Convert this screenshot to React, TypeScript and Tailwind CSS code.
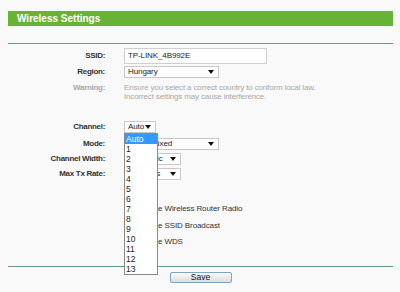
import React from 'react'

const channels = ['Auto', '1', '2', '3', '4', '5', '6', '7', '8', '9', '10', '11', '12', '13']

const Arrow = () => (
  <svg width="6" height="4" viewBox="0 0 6 4" className="shrink-0">
    <path d="M0 0h6L3 4z" fill="#111" />
  </svg>
)

const Select = ({ value, width }: { value: string; width: string }) => (
  <div
    className={`flex h-[12px] ${width} items-center justify-between border border-[#c9c9c9] bg-white pl-[3px] pr-[4px] text-[8px] leading-none tracking-[-0.1px] text-[#222]`}
  >
    <span>{value}</span>
    <Arrow />
  </div>
)

const Row = ({
  label,
  children,
  muted,
  className = '',
}: {
  label: string
  children: React.ReactNode
  muted?: boolean
  className?: string
}) => (
  <div className={`grid grid-cols-[97px_1fr] items-center gap-[19px] ${className}`}>
    <span
      className={`text-right text-[8px] font-bold tracking-[-0.3px] ${muted ? 'text-[#a8a8a8]' : 'text-[#333]'}`}
    >
      {label}
    </span>
    <div>{children}</div>
  </div>
)

const Check = ({ label }: { label: string }) => (
  <div className="flex h-[16.5px] items-center gap-[3px] pl-[117px] text-[8px] tracking-[-0.1px] text-[#333]">
    <span className="h-[10px] w-[10px] border border-[#999] bg-white" />
    <span>{label}</span>
  </div>
)

export default function App() {
  return (
    <div
      className="h-[292px] w-[400px] bg-[#f9f9f9] px-[8px] pt-[11px]"
      style={{ fontFamily: '"Liberation Sans", Arial, sans-serif' }}
    >
      <div className="w-[385px]">
        <div className="flex h-[15px] items-center bg-[#67b434] pl-[9px] text-[10px] font-bold text-white">
          Wireless Settings
        </div>
        <div className="mt-[17px] h-px bg-[#5f9b8c]" />

        <Row label="SSID:" className="mt-[4px]">
          <div className="flex h-[16px] w-[143px] items-center border border-[#cfcfcf] bg-white pl-[3px] text-[8px] tracking-[-0.1px] text-[#222]">
            TP-LINK_4B992E
          </div>
        </Row>
        <Row label="Region:" className="mt-[2px]">
          <Select value="Hungary" width="w-[95px]" />
        </Row>
        <Row label="Warning:" muted className="mt-[4px] items-start">
          <p className="pt-[1px] text-[8px] leading-[9px] tracking-[-0.15px] text-[#a8a8a8]">
            Ensure you select a correct country to conform local law.
            <br />
            Incorrect settings may cause interference.
          </p>
        </Row>

        <div className="relative mt-[20px]">
          <Row label="Channel:">
            <Select value="Auto" width="w-[32px]" />
          </Row>
          <Row label="Mode:" className="mt-[5px]">
            <Select value="11bgn mixed" width="w-[95px]" />
          </Row>
          <Row label="Channel Width:" className="mt-[3px]">
            <Select value="Automatic" width="w-[57px]" />
          </Row>
          <Row label="Max Tx Rate:" className="mt-[3px]">
            <Select value="300Mbps" width="w-[57px]" />
          </Row>

          <div className="mt-[21px]">
            <Check label="Enable Wireless Router Radio" />
            <Check label="Enable SSID Broadcast" />
            <Check label="Enable WDS" />
          </div>

          <ul className="absolute left-[116px] top-[12px] z-10 w-[34px] border border-[#8a8a8a] bg-white text-[8.5px] leading-[10px] text-[#222]">
            {channels.map((c, i) => (
              <li key={c} className={`pl-[1px] ${i === 0 ? 'bg-[#3399ff] text-white' : ''}`}>
                {c}
              </li>
            ))}
          </ul>
        </div>

        <div className="mt-[15px] h-px bg-[#5f9b8c]" />
        <div className="mt-[5px] flex justify-center">
          <button className="h-[11px] w-[62px] rounded-[2px] border border-[#7aa7c7] bg-gradient-to-b from-[#fbfbfb] to-[#dcdcdc] text-[8.5px] leading-none text-[#111]">
            Save
          </button>
        </div>
      </div>
    </div>
  )
}
